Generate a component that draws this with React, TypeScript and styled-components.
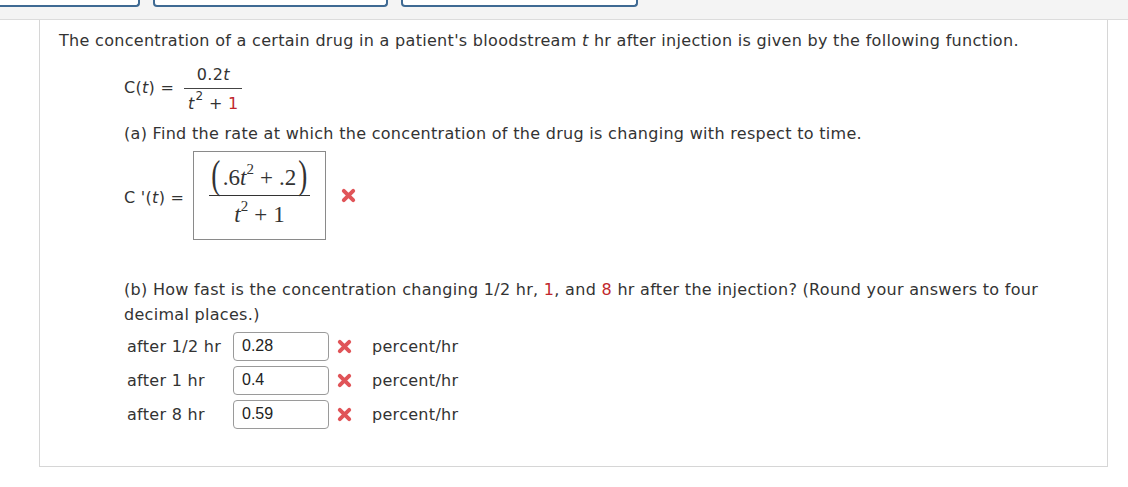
import React from "react";
import styled, { createGlobalStyle } from "styled-components";

const Global = createGlobalStyle`
  html, body { margin: 0; padding: 0; background: #fff; }
  body { font-family: "DejaVu Sans", Verdana, sans-serif; color: #333; }
`;

const TopBar = styled.div`
  height: 19px;
  background: #f4f4f4;
  border-bottom: 1px solid #dcdcdc;
  display: flex;
  gap: 13px;
  align-items: flex-start;
`;

const Tab = styled.div<{ $w: number; $cut?: boolean }>`
  width: ${(p) => p.$w}px;
  box-sizing: border-box;
  height: 7px;
  background: #fff;
  border: 2px solid #3f6a93;
  border-top: none;
  border-left-width: ${(p) => (p.$cut ? 0 : 2)}px;
  border-radius: ${(p) => (p.$cut ? "0 0 4px 0" : "0 0 4px 4px")};
`;

const Card = styled.div`
  margin-left: 39px;
  width: 1069px;
  height: 447px;
  border: 1px solid #d6d6d6;
  border-top: none;
  padding: 8px 40px 0 19px;
  box-sizing: border-box;
  font-size: 16px;
  letter-spacing: 0.3px;
  line-height: 25px;
`;

const Para = styled.p`
  margin: 0;
`;

const Indent = styled.div`
  margin-left: 65px;
`;

const Formula = styled.div`
  display: flex;
  align-items: center;
  gap: 10px;
  margin-top: 4px;
  height: 64px;
`;

const FormulaLabel = styled.span`
  padding-bottom: 3px;
`;

const Frac = styled.div`
  display: inline-flex;
  flex-direction: column;
  align-items: center;
  line-height: 20px;
`;

const Num = styled.div`
  padding: 0 4px 3px;
  border-bottom: 1.5px solid #444;
  min-width: 50px;
  text-align: center;
`;

const Den = styled.div`
  padding-top: 5px;
  text-align: center;
`;

const I = styled.i`
  font-style: italic;
`;

const Red = styled.span`
  color: #c1272d;
`;

const Sup = styled.sup`
  font-size: 12px;
  line-height: 0;
  margin-left: 1px;
  position: relative;
  top: -2px;
`;

const Deriv = styled.div`
  display: flex;
  align-items: center;
  margin-top: 4px;
  height: 90px;
`;

const DerivLabel = styled.span`
  width: 69px;
  padding-top: 4px;
`;

const AnswerBox = styled.div`
  width: 133px;
  height: 89px;
  box-sizing: border-box;
  border: 1px solid #8a8a8a;
  display: flex;
  align-items: center;
  justify-content: center;
  padding-top: 4px;
`;

const MathFrac = styled.div`
  display: flex;
  flex-direction: column;
  align-items: center;
  font-family: "Liberation Serif", "DejaVu Serif", serif;
  font-size: 23px;
  letter-spacing: 0;
  color: #333;
`;

const MathNum = styled.div`
  display: flex;
  align-items: center;
  padding: 0 0 3px;
  border-bottom: 1.3px solid #333;
  line-height: 28px;
`;

const Paren = styled.span`
  font-size: 40px;
  font-weight: 300;
  line-height: 28px;
  transform: scaleX(0.68);
  display: inline-block;
  position: relative;
  top: -3px;
`;

const MathDen = styled.div`
  line-height: 30px;
  padding-top: 4px;
`;

const MSup = styled.sup`
  font-size: 15px;
  line-height: 0;
  position: relative;
  top: -2px;
`;

const MI = styled.i`
  font-style: italic;
`;

const Op = styled.span`
  margin: 0 6px;
`;

const Mark = styled.span<{ $ml: number }>`
  display: inline-flex;
  margin-left: ${(p) => p.$ml}px;
`;

const PartB = styled.div`
  margin-top: 37px;
`;

const Rows = styled.div`
  margin-left: 3px;
  margin-top: 5px;
  display: flex;
  flex-direction: column;
  gap: 5px;
`;

const Row = styled.div`
  display: flex;
  align-items: center;
  height: 29px;
`;

const RowLabel = styled.span`
  width: 106px;
`;

const Input = styled.div`
  width: 96px;
  height: 29px;
  box-sizing: border-box;
  border: 1px solid #9a9a9a;
  border-radius: 4px;
  font-family: "Liberation Sans", Arial, sans-serif;
  font-size: 16px;
  letter-spacing: 0;
  line-height: 25px;
  padding-left: 8px;
  color: #222;
`;

const Unit = styled.span`
  margin-left: 20px;
`;

const XMark = ({ size = 15 }: { size?: number }) => (
  <svg width={size} height={size} viewBox="0 0 16 16">
    <path
      d="M3 3 L13 13 M13 3 L3 13"
      stroke="#e05458"
      strokeWidth={4.2}
      strokeLinecap="round"
    />
  </svg>
);

const rows = [
  { label: "after 1/2 hr", value: "0.28" },
  { label: "after 1 hr", value: "0.4" },
  { label: "after 8 hr", value: "0.59" },
];

export default function App() {
  return (
    <>
      <Global />
      <TopBar>
        <Tab $w={140} $cut />
        <Tab $w={235} />
        <Tab $w={237} />
      </TopBar>
      <Card>
        <Para>
          The concentration of a certain drug in a patient's bloodstream <I>t</I> hr after injection is given
          by the following function.
        </Para>
        <Indent>
          <Formula>
            <FormulaLabel>
              C(<I>t</I>) =
            </FormulaLabel>
            <Frac>
              <Num>
                0.2<I>t</I>
              </Num>
              <Den>
                <I>t</I>
                <Sup>2</Sup> + <Red>1</Red>
              </Den>
            </Frac>
          </Formula>
          <Para>
            (a) Find the rate at which the concentration of the drug is changing with respect to time.
          </Para>
          <Deriv>
            <DerivLabel>
              C '(<I>t</I>) =
            </DerivLabel>
            <AnswerBox>
              <MathFrac>
                <MathNum>
                  <Paren>(</Paren>
                  <span>
                    .6<MI>t</MI>
                    <MSup>2</MSup>
                    <Op>+</Op>.2
                  </span>
                  <Paren>)</Paren>
                </MathNum>
                <MathDen>
                  <MI>t</MI>
                  <MSup>2</MSup>
                  <Op>+</Op>1
                </MathDen>
              </MathFrac>
            </AnswerBox>
            <Mark $ml={15}>
              <XMark />
            </Mark>
          </Deriv>
          <PartB>
            <Para>
              (b) How fast is the concentration changing 1/2 hr, <Red>1</Red>, and <Red>8</Red> hr after the
              injection? (Round your answers to four decimal places.)
            </Para>
            <Rows>
              {rows.map((r) => (
                <Row key={r.label}>
                  <RowLabel>{r.label}</RowLabel>
                  <Input>{r.value}</Input>
                  <Mark $ml={8}>
                    <XMark />
                  </Mark>
                  <Unit>percent/hr</Unit>
                </Row>
              ))}
            </Rows>
          </PartB>
        </Indent>
      </Card>
    </>
  );
}
